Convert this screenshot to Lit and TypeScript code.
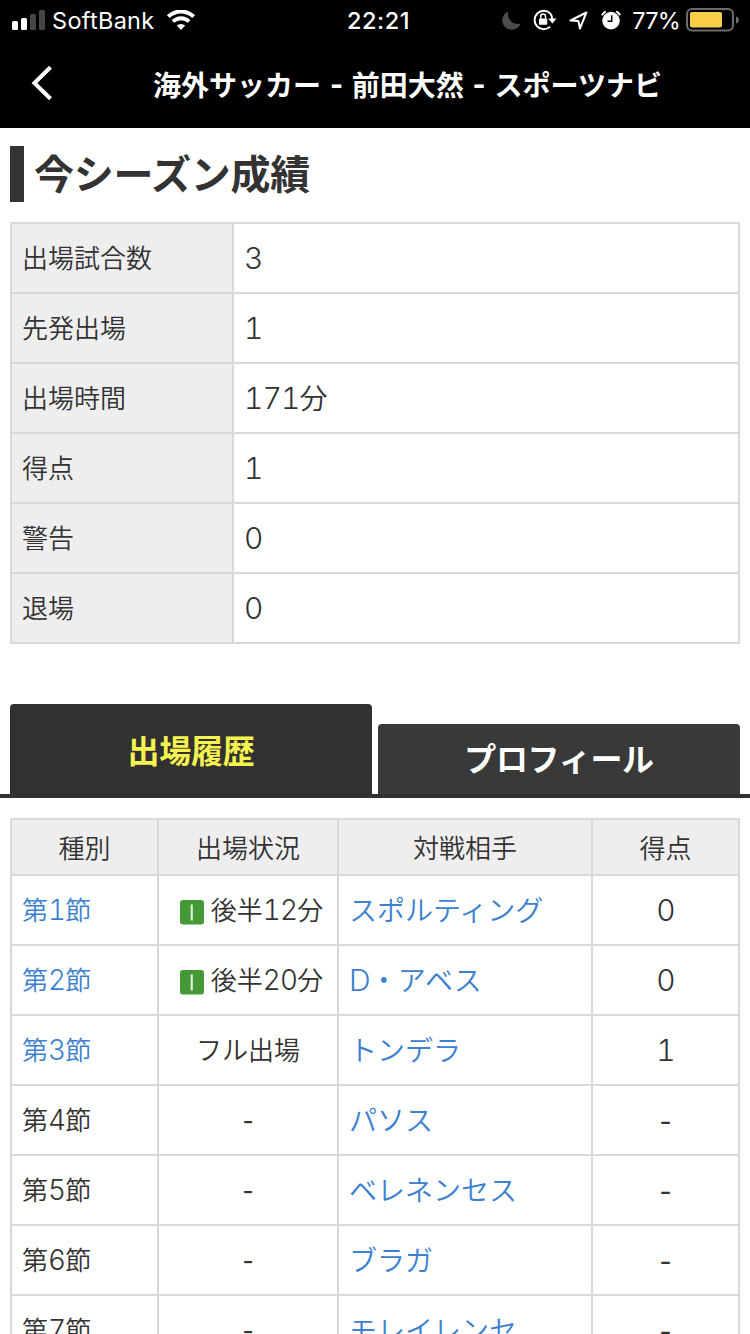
import { LitElement, html, css, svg } from "lit";
import { customElement, property } from "lit/decorators.js";

/** Wraps runs of Latin digits, letters and dashes so they get their own face and size. */
const mixed = (text: string) =>
  text.split(/([0-9A-Z]+|-)/).map((part) =>
    part === "-"
      ? html`<span class="dash">-</span>`
      : /^[0-9A-Z]+$/.test(part)
        ? html`<span class="latin">${part}</span>`
        : part
  );

const latinStyles = css`
  .latin {
    font-family: Inter, "Liberation Sans", sans-serif;
    font-size: 1.07em;
    line-height: 0;
    letter-spacing: -0.03em;
    font-feature-settings: "tnum" 1;
  }
  .dash {
    font-family: "Noto Sans CJK JP", sans-serif;
    font-size: 1.18em;
    font-weight: 400;
    line-height: 0;
    vertical-align: -1px;
  }
`;

@customElement("status-bar")
class StatusBar extends LitElement {
  static styles = css`
    :host {
      display: grid;
      grid-template-columns: 1fr auto 1fr;
      align-items: center;
      height: 40px;
      color: #fff;
      font: 400 23.5px/40px Inter, "Liberation Sans", sans-serif;
    }
    .side {
      display: flex;
      align-items: center;
    }
    .left {
      padding-left: 12px;
    }
    .right {
      justify-content: flex-end;
      padding-right: 11px;
    }
    svg {
      display: block;
      flex: none;
    }
    .carrier,
    .time,
    .percent {
      padding-top: 2px;
      line-height: 38px;
    }
    .carrier {
      margin: 0 12px 0 7px;
      letter-spacing: 0.3px;
    }
    .time {
      font-weight: 550;
      letter-spacing: 0.5px;
      padding-left: 7px;
    }
    .percent {
      margin: 0 6px 0 11px;
      letter-spacing: -0.8px;
    }
    .lock {
      margin-left: 12px;
    }
    .arrow {
      margin-left: 12px;
    }
    .alarm {
      margin-left: 13px;
    }
  `;
  render() {
    return html`
      <div class="side left">
        <svg width="33" height="20" viewBox="0 0 33 20">
          <rect x="0" y="11" width="6" height="9" rx="1.5" fill="#fff" />
          <rect x="9" y="8" width="6" height="12" rx="1.5" fill="#fff" />
          <rect x="18" y="4" width="6" height="16" rx="1.5" fill="#464646" />
          <rect x="27" y="0" width="6" height="20" rx="1.5" fill="#464646" />
        </svg>
        <span class="carrier">SoftBank</span>
        <svg width="28" height="20" viewBox="0 0 28 20" fill="none" stroke="#fff">
          <path d="M1.3 6.600a18.200 18.200 0 0 1 25.400 0" stroke-width="4" />
          <path d="M5.900 11.500a11.700 11.700 0 0 1 16.200 0" stroke-width="3.800" />
          <path d="M14 20l-4.200-4.400a6 6 0 0 1 8.400 0z" fill="#fff" stroke="none" />
        </svg>
      </div>
      <span class="time">22:21</span>
      <div class="side right">
        <svg width="19" height="19" viewBox="0 0 19 19">
          <path d="M6.5 .5A9.4 9.4 0 1 0 18.5 12.6 9.6 9.6 0 0 1 6.5 .5z" fill="#4c4c4c" />
        </svg>
        <svg class="lock" width="24" height="22" viewBox="0 0 24 22" fill="none">
          <path d="M17.2 4.4A9.2 9.2 0 1 0 17.2 17.6M19.2 11A9.2 9.2 0 0 0 17.2 4.4" stroke="#fff" stroke-width="2" />
          <path d="M15.2 9.4h8.3l-4.1 5z" fill="#fff" />
          <rect x="6" y="9.4" width="8.2" height="6.4" rx=".8" fill="#fff" />
          <path d="M7.7 9.5V7.4a2.4 2.4 0 0 1 4.8 0v2.1" stroke="#fff" stroke-width="1.5" />
        </svg>
        <svg class="arrow" width="19" height="19" viewBox="0 0 19 19" fill="none">
          <path d="M1.5 9.5L17.4 1.5 10.900 17.500 9.400 9.900z" stroke="#fff" stroke-width="2" stroke-linejoin="round" />
        </svg>
        <svg class="alarm" width="20" height="20" viewBox="0 0 20 20" fill="none">
          <circle cx="10" cy="10.6" r="8.8" fill="#fff" />
          <path d="M.9 5.2A10 10 0 0 1 4.7 1.4M15.3 1.4a10 10 0 0 1 3.8 3.8" stroke="#fff" stroke-width="2" />
          <path d="M10.7 5.3v6H6.5" stroke="#000" stroke-width="1.5" />
        </svg>
        <span class="percent">77%</span>
        <svg width="53" height="24" viewBox="0 0 53 24" fill="none">
          <rect x="1" y="1" width="46" height="21.6" rx="5" stroke="#6c6c6c" stroke-width="2" />
          <rect x="4" y="4" width="32" height="15.4" rx="1.8" fill="#f7ce45" />
          <path d="M50 8.2c1.8.8 2.9 2 2.9 3.7S51.800 14.800 50 15.600z" fill="#6c6c6c" />
        </svg>
      </div>
    `;
  }
}

@customElement("nav-bar")
class NavBar extends LitElement {
  @property() heading = "";
  static styles = css`
    :host {
      display: grid;
      grid-template-columns: 65px 1fr;
      align-items: center;
      height: 88px;
      color: #fff;
    }
    svg {
      display: block;
      margin: -2px 0 0 30px;
    }
    h1 {
      margin: 0;
      text-align: center;
      font: 700 28px/40px "Noto Sans CJK JP", sans-serif;
      word-spacing: 2.7px;
      white-space: nowrap;
    }
    .dash {
      font-size: 34px;
      line-height: 0;
    }
  `;
  render() {
    const parts = this.heading.split("-");
    return html`
      <svg width="23" height="36" viewBox="0 0 23 36">
        <path d="M20.500 2.200L4.400 18 20.500 33.800" fill="none" stroke="#fff" stroke-width="4" />
      </svg>
      <h1>${parts.map((p, i) => (i ? html`<span class="dash">-</span>${p}` : p))}</h1>
    `;
  }
}

@customElement("season-stats")
class SeasonStats extends LitElement {
  @property({ attribute: false }) stats: [string, string][] = [];
  static styles = [
    latinStyles,
    css`
      :host {
        display: grid;
        grid-template-columns: 220px 1fr;
        grid-auto-rows: 68px;
        gap: 2px;
        padding: 2px;
        background: #d9d9d9;
      }
      .label,
      .value {
        padding-left: 10px;
        line-height: 66px;
      }
      .label {
        background: #eee;
        font-size: 26px;
      }
      .value {
        background: #fff;
        font-size: 28px;
      }
    `,
  ];
  render() {
    return this.stats.map(
      ([label, value]) => html`
        <div class="label">${label}</div>
        <div class="value">${mixed(value)}</div>
      `
    );
  }
}

interface Match {
  round: string;
  status: string;
  opponent: string;
  goals: string;
  played?: boolean;
  subbedIn?: boolean;
}

@customElement("match-history")
class MatchHistory extends LitElement {
  @property({ attribute: false }) matches: Match[] = [];
  static styles = [
    latinStyles,
    css`
      :host {
        display: grid;
        grid-template-columns: 145px 178px 252px 145px;
        grid-template-rows: 54px;
        grid-auto-rows: 68px;
        gap: 2px;
        padding: 2px;
        background: #d9d9d9;
        font-size: 26px;
      }
      .head {
        background: #eee;
        text-align: center;
        line-height: 53px;
      }
      .cell {
        background: #fff;
        line-height: 65px;
        white-space: nowrap;
      }
      .round {
        padding-left: 10px;
      }
      .status {
        display: flex;
        justify-content: center;
      }
      .subbed {
        padding-left: 7px;
      }
      .opponent {
        padding-left: 10px;
        font-size: 28px;
        line-height: 66px;
      }
      .goals {
        text-align: center;
        font-size: 28px;
        line-height: 67px;
      }
      .link {
        color: #3c81cf;
      }
      .badge {
        align-self: center;
        margin: 4px 7px 0 0;
      }
    `,
  ];
  render() {
    const badge = svg`<rect width="24" height="24.500" rx="3" fill="#469a36"/><rect x="10.700" y="4.500" width="2.100" height="16" fill="#e3f0e0"/>`;
    return html`
      ${["種別", "出場状況", "対戦相手", "得点"].map((h) => html`<div class="head">${h}</div>`)}
      ${this.matches.map(
        (m) => html`
          <div class="cell round ${m.played ? "link" : ""}"><span>${mixed(m.round)}</span></div>
          <div class="cell status ${m.subbedIn ? "subbed" : ""}">
            ${m.subbedIn ? html`<svg class="badge" width="24" height="25">${badge}</svg>` : ""}
            <span>${mixed(m.status)}</span>
          </div>
          <div class="cell opponent link">${mixed(m.opponent)}</div>
          <div class="cell goals">${mixed(m.goals)}</div>
        `
      )}
    `;
  }
}

@customElement("app-root")
class AppRoot extends LitElement {
  static styles = css`
    :host {
      display: block;
      width: 750px;
      height: 1334px;
      overflow: hidden;
      background: #fff;
      color: #333;
      font-family: "Noto Sans CJK JP", sans-serif;
      font-weight: 350;
    }
    .top {
      background: #000;
    }
    main {
      padding-top: 18px;
    }
    .title {
      margin: 0 10px 20px;
      height: 56px;
      border-left: 14px solid #333;
      padding-left: 10px;
      font-size: 40px;
      font-weight: 700;
      line-height: 52px;
      letter-spacing: -0.3px;
    }
    season-stats,
    match-history {
      margin: 0 10px;
    }
    .tabs {
      display: grid;
      grid-template-columns: 1fr 1fr;
      gap: 6px;
      align-items: end;
      margin: 60px 0 20px;
      padding: 0 10px;
      border-bottom: 4px solid #313131;
      font-size: 32px;
      font-weight: 700;
      text-align: center;
    }
    .tab {
      height: 70px;
      border-radius: 4px 4px 0 0;
      background: #393939;
      color: #fff;
      line-height: 67px;
      letter-spacing: -0.3px;
    }
    .active {
      height: 90px;
      background: #313131;
      color: #f5f34f;
      line-height: 90px;
    }
  `;

  private stats: [string, string][] = [
    ["出場試合数", "3"],
    ["先発出場", "1"],
    ["出場時間", "171分"],
    ["得点", "1"],
    ["警告", "0"],
    ["退場", "0"],
  ];

  private matches: Match[] = [
    { round: "第1節", status: "後半12分", opponent: "スポルティング", goals: "0", played: true, subbedIn: true },
    { round: "第2節", status: "後半20分", opponent: "D・アベス", goals: "0", played: true, subbedIn: true },
    { round: "第3節", status: "フル出場", opponent: "トンデラ", goals: "1", played: true },
    { round: "第4節", status: "-", opponent: "パソス", goals: "-" },
    { round: "第5節", status: "-", opponent: "ベレネンセス", goals: "-" },
    { round: "第6節", status: "-", opponent: "ブラガ", goals: "-" },
    { round: "第7節", status: "-", opponent: "モレイレンセ", goals: "-" },
  ];

  render() {
    return html`
      <div class="top">
        <status-bar></status-bar>
        <nav-bar heading="海外サッカー - 前田大然 - スポーツナビ"></nav-bar>
      </div>
      <main>
        <div class="title">今シーズン成績</div>
        <season-stats .stats=${this.stats}></season-stats>
        <div class="tabs">
          <div class="tab active">出場履歴</div>
          <div class="tab">プロフィール</div>
        </div>
        <match-history .matches=${this.matches}></match-history>
      </main>
    `;
  }
}
